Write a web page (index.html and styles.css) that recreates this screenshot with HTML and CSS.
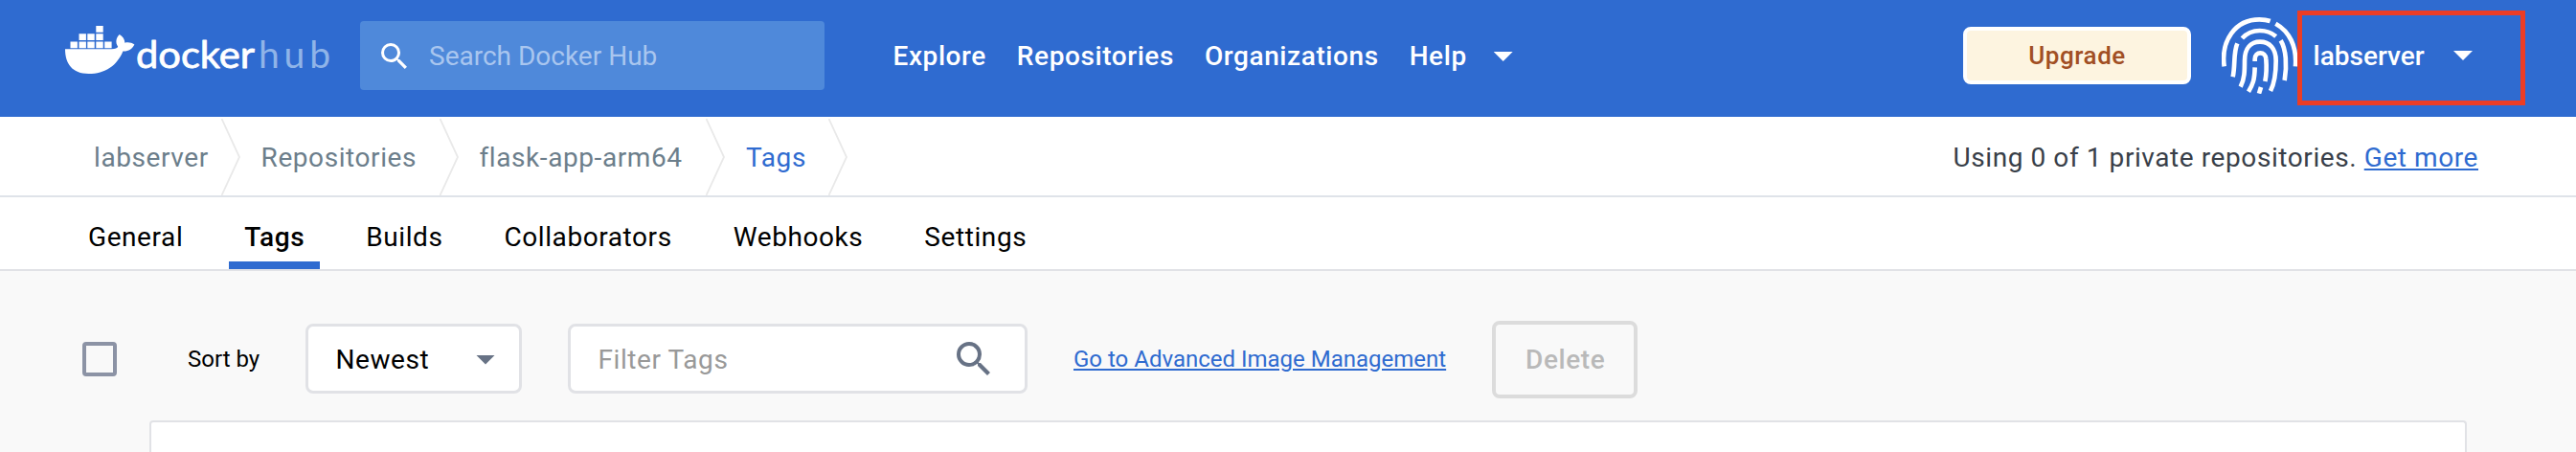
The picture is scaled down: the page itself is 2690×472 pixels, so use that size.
FILE: index.html
```html
<!DOCTYPE html>
<html lang="en">
<head>
<meta charset="utf-8">
<title>Docker Hub</title>
<link rel="stylesheet" href="styles.css">
</head>
<body>
<header class="header">
  <svg class="logo" viewBox="0 0 280 56" role="img" aria-label="docker hub">
    <g fill="#fff">
      <path d="M32.3 3h7.4v6.8h-7.4zM14.5 11.2h7.4V18h-7.4zM23.3 11.2h7.4V18h-7.4zM32.3 11.2h7.4V18h-7.4zM5.5 19.4h7.4v6.8H5.500zM14.5 19.4h7.4v6.8h-7.4zM23.3 19.4h7.4v6.8h-7.4zM32.3 19.4h7.4v6.8h-7.4zM41.2 19.4h7.4v6.8h-7.4z"/>
      <path d="M0 27.3h48.500c4 0 6-1.300 6.700-2.600-3-4.200-2-9.500 1.600-12.700 3.500 2 5.500 5.200 5.600 8.700 3.200-.8 7-.3 10 1.700-2.300 4.800-6.400 7.300-12 7C54.500 44 42 53 24.500 53 7.500 53 0 42.500 0 27.300z"/>
    </g>
    <text class="logo-name" x="74" y="46.500" textLength="124" lengthAdjust="spacingAndGlyphs">docker</text>
    <text class="logo-hub" x="202" y="46.500" textLength="75">hub</text>
  </svg>
  <div class="search">
    <svg class="search-icon" viewBox="3 3 17.500 17.500"><path fill="#fff" d="M15.500 14h-.79l-.28-.27A6.471 6.471 0 0 0 16 9.500 6.500 6.500 0 1 0 9.500 16c1.610 0 3.090-.59 4.230-1.570l.27.28v.79l5 4.990L20.490 19l-4.990-5zm-6 0C7.010 14 5 11.990 5 9.500S7.010 5 9.500 5 14 7.010 14 9.500 11.990 14 9.500 14z"/></svg>
    <span>Search Docker Hub</span>
  </div>
  <nav class="nav">
    <a>Explore</a><a>Repositories</a><a>Organizations</a><a>Help</a>
    <i class="caret"></i>
  </nav>
  <button class="upgrade">Upgrade</button>
  <svg class="avatar" viewBox="90 54 240 240" fill="none" stroke="#fff" stroke-width="14">
    <path d="M98 208C87 128 132 61 208 61Q228 61 242 66"/>
    <path d="M259 74C302 98 326 145 321 208"/>
    <path d="M154 120Q176 96 209 96Q239 96 260 114"/>
    <path d="M139 136C126 165 133 205 125 241"/>
    <path d="M275 127C292 155 295 205 287 252"/>
    <path d="M149 272C162 248 162 220 162 190C162 150 182 131 210 131C240 131 260 152 260 190C260 235 255 262 243 285"/>
    <path d="M194 192V185C194 160 228 160 229 185C231 210 231 230 226 255"/>
    <path d="M194 211C193 250 188 264 174 287"/>
    <path d="M213 273L207 293"/>
  </svg>
  <div class="user"><span>labserver</span><i class="caret"></i></div>
</header>

<div class="crumbs">
  <a class="crumb crumb-first">labserver</a>
  <svg class="sep" viewBox="0 0 20 80"><path d="M.5 0L19 40L.5 80"/></svg>
  <a class="crumb">Repositories</a>
  <svg class="sep" viewBox="0 0 20 80"><path d="M.5 0L19 40L.5 80"/></svg>
  <a class="crumb">flask-app-arm64</a>
  <svg class="sep" viewBox="0 0 20 80"><path d="M.5 0L19 40L.5 80"/></svg>
  <a class="crumb crumb-current">Tags</a>
  <svg class="sep" viewBox="0 0 20 80"><path d="M.5 0L19 40L.5 80"/></svg>
  <p class="usage">Using 0 of 1 private repositories. <a>Get more</a></p>
</div>

<nav class="tabs">
  <a class="tab">General</a>
  <a class="tab tab-active">Tags</a>
  <a class="tab">Builds</a>
  <a class="tab">Collaborators</a>
  <a class="tab">Webhooks</a>
  <a class="tab">Settings</a>
</nav>

<main class="content">
  <div class="toolbar">
    <span class="checkbox"></span>
    <span class="sort-label">Sort by</span>
    <div class="field select"><span>Newest</span><i class="caret caret-grey"></i></div>
    <div class="field filter">
      <span>Filter Tags</span>
      <svg class="filter-icon" viewBox="3 3 17.500 17.500"><path fill="#677285" d="M15.500 14h-.79l-.28-.27A6.471 6.471 0 0 0 16 9.500 6.500 6.500 0 1 0 9.500 16c1.610 0 3.090-.59 4.230-1.570l.27.28v.79l5 4.990L20.490 19l-4.990-5zm-6 0C7.010 14 5 11.990 5 9.500S7.010 5 9.500 5 14 7.010 14 9.500 11.990 14 9.500 14z"/></svg>
    </div>
    <a class="manage">Go to Advanced Image Management</a>
    <button class="delete">Delete</button>
  </div>
  <section class="panel"></section>
</main>
</body>
</html>
```
FILE: styles.css
```css
* { box-sizing: border-box; }

body {
  margin: 0;
  height: 472px;
  overflow: hidden;
  display: flex;
  flex-direction: column;
  background: #f9f9f9;
  color: #000;
  font: 400 28px/33px Roboto, sans-serif;
  letter-spacing: 0.58px;
  white-space: nowrap;
}

button { font: inherit; letter-spacing: inherit; padding: 0; }
svg { display: block; flex: none; }

.header {
  flex: none;
  height: 122px;
  padding: 0 53px 6px 68px;
  display: flex;
  align-items: center;
  background: #2f6bd0;
  color: #fff;
  font-weight: 500;
}

.logo { width: 280px; height: 56px; margin-bottom: 12px; overflow: visible; }
.logo text { font-family: Lato, sans-serif; font-size: 39px; letter-spacing: 0; }
.logo-name { fill: #fff; stroke: #fff; stroke-width: 0.8px; stroke-linejoin: round; font-weight: 400; }
.logo-hub { fill: #8fb4e8; font-weight: 400; }

.search {
  width: 485px;
  height: 72px;
  margin-left: 28px;
  padding-left: 22px;
  display: flex;
  align-items: center;
  border-radius: 4px;
  background: #4f89da;
  color: #a9c6ef;
  font-weight: 400;
  letter-spacing: 0;
}
.search-icon { width: 27px; height: 27px; margin-right: 23px; }

.nav { display: flex; align-items: center; gap: 32px; margin-left: 71.5px; }

.caret {
  flex: none;
  width: 20px;
  height: 10px;
  background: #fff;
  clip-path: polygon(0 0, 100% 0, 50% 100%);
}
.caret-grey { background: #677285; }
.nav .caret { margin-left: -4px; margin-top: 2px; }

.upgrade {
  width: 238px;
  height: 60px;
  margin-left: auto;
  border: 4px solid #fff;
  border-radius: 8px;
  background: #fdf4e0;
  color: #a14f24;
  font-size: 26px;
}

.avatar { width: 80px; height: 80px; margin-left: 32px; }

.user {
  width: 238px;
  height: 99px;
  margin: 5px 0 0 -1px;
  padding: 0 50px 5px 11.5px;
  display: flex;
  align-items: center;
  justify-content: space-between;
  border: 5px solid #eb3d25;
  letter-spacing: 0;
}

.crumbs {
  flex: none;
  height: 84px;
  padding: 2px 102px 0 98px;
  display: flex;
  align-items: center;
  border-bottom: 2px solid #dfe3e9;
  background: #fff;
  color: #6c7e8b;
}
.crumb { margin: 0 24px 0 21.5px; }
.crumb-first { margin: 0 13.3px 0 0; }
.crumb-current { margin: 0 23px 0 22.5px; color: #2f6bd0; }
.sep { width: 20px; height: 80px; fill: none; stroke: #e9e9e9; stroke-width: 1.8px; }
.usage { margin: 0 0 0 auto; color: #393f49; }
.usage a { color: #2f6bd0; text-decoration: underline; }

.tabs {
  flex: none;
  height: 77px;
  padding-left: 76px;
  display: flex;
  gap: 32px;
  border-bottom: 2px solid #e1e2e6;
  background: #fff;
}
.tab { height: 75px; padding: 25px 16px 0; }
.tab-active { font-weight: 500; border-bottom: 8px solid #2f6bd0; }

.content { flex: 1; display: flex; flex-direction: column; padding: 52px 114px 0 86px; }
.toolbar { flex: none; height: 81px; display: flex; align-items: center; }

.checkbox {
  width: 36px;
  height: 36px;
  margin-bottom: 1px;
  border: 4px solid #8c93a5;
  border-radius: 4px;
}
.sort-label { width: 123px; margin-left: 74px; font-size: 24px; letter-spacing: 0; }

.field {
  height: 73px;
  margin-bottom: 2px;
  display: flex;
  align-items: center;
  justify-content: space-between;
  border: 3px solid #e1e2e6;
  border-radius: 8px;
  background: #fff;
}
.select { width: 226px; padding: 2px 25px 0 28.5px; }
.filter { width: 480px; margin-left: 48px; padding: 2px 36px 0 28.5px; color: #999; }
.filter-icon { width: 35px; height: 35px; margin-top: -3px; }

.manage {
  margin-left: 48px;
  color: #2f6bd0;
  font-size: 24px;
  letter-spacing: 0;
  text-decoration: underline;
}
.delete {
  width: 152px;
  height: 81px;
  margin-left: 48px;
  padding-left: 1px;
  border: 4px solid #dcdcdc;
  border-radius: 8px;
  background: transparent;
  color: #b9b9b9;
  font-weight: 500;
}

.panel {
  flex: 1;
  margin: 23px 0 0 70px;
  border: 2px solid #e1e2e6;
  border-bottom: 0;
  border-radius: 4px 4px 0 0;
  background: #fff;
}
```
